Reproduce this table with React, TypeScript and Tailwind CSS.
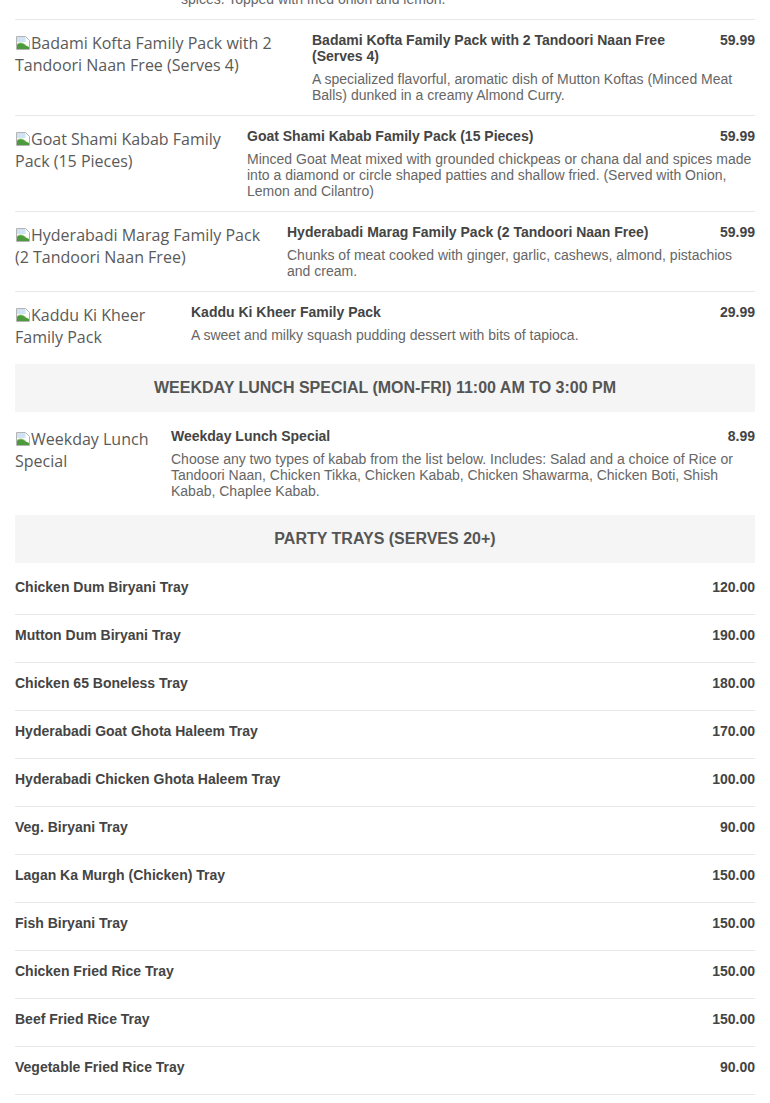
const items = [
  {
    alt: 'Badami Kofta Family Pack with 2 Tandoori Naan Free (Serves 4)',
    imgW: 'w-[282px]',
    title: 'Badami Kofta Family Pack with 2 Tandoori Naan Free (Serves 4)',
    price: '59.99',
    desc: 'A specialized flavorful, aromatic dish of Mutton Koftas (Minced Meat Balls) dunked in a creamy Almond Curry.',
  },
  {
    alt: 'Goat Shami Kabab Family Pack (15 Pieces)',
    imgW: 'w-[217px]',
    title: 'Goat Shami Kabab Family Pack (15 Pieces)',
    price: '59.99',
    desc: 'Minced Goat Meat mixed with grounded chickpeas or chana dal and spices made into a diamond or circle shaped patties and shallow fried. (Served with Onion, Lemon and Cilantro)',
  },
  {
    alt: 'Hyderabadi Marag Family Pack (2 Tandoori Naan Free)',
    imgW: 'w-[257px]',
    title: 'Hyderabadi Marag Family Pack (2 Tandoori Naan Free)',
    price: '59.99',
    desc: 'Chunks of meat cooked with ginger, garlic, cashews, almond, pistachios and cream.',
  },
  {
    alt: 'Kaddu Ki Kheer Family Pack',
    imgW: 'w-[161px]',
    title: 'Kaddu Ki Kheer Family Pack',
    price: '29.99',
    desc: 'A sweet and milky squash pudding dessert with bits of tapioca.',
  },
];

const lunch = [
  {
    alt: 'Weekday Lunch Special',
    imgW: 'w-[141px]',
    title: 'Weekday Lunch Special',
    price: '8.99',
    desc: 'Choose any two types of kabab from the list below. Includes: Salad and a choice of Rice or Tandoori Naan, Chicken Tikka, Chicken Kabab, Chicken Shawarma, Chicken Boti, Shish Kabab, Chaplee Kabab.',
  },
];

const trays = [
  ['Chicken Dum Biryani Tray', '120.00'],
  ['Mutton Dum Biryani Tray', '190.00'],
  ['Chicken 65 Boneless Tray', '180.00'],
  ['Hyderabadi Goat Ghota Haleem Tray', '170.00'],
  ['Hyderabadi Chicken Ghota Haleem Tray', '100.00'],
  ['Veg. Biryani Tray', '90.00'],
  ['Lagan Ka Murgh (Chicken) Tray', '150.00'],
  ['Fish Biryani Tray', '150.00'],
  ['Chicken Fried Rice Tray', '150.00'],
  ['Beef Fried Rice Tray', '150.00'],
  ['Vegetable Fried Rice Tray', '90.00'],
];

// what chrome draws when the photo didn't load
function BrokenImg() {
  return (
    <svg width="16" height="16" viewBox="0 0 16 16" className="inline-block align-[-2px]">
      <path d="M1.5 1.5h9l4 4v9h-13z" fill="#fff" stroke="#b4b4b4" />
      <path d="M2 2h8.5v5H2z" fill="#cfe3f4" />
      <path d="M2 14V9.5C5 7 8 8 11 10.5L14 12v2z" fill="#4c9a3c" />
      <path d="M2 9.5C5 7 8 8 11 10.5" fill="none" stroke="#8cc46f" />
    </svg>
  );
}

type Item = { alt: string; imgW: string; title: string; price: string; desc: string };

function MenuRow({ item, last }: { item: Item; last?: boolean }) {
  return (
    <div className={`flex gap-[15px] pt-3 pb-3 ${last ? 'mb-1' : 'border-b border-[#e8e8e8]'}`}>
      <div className={`${item.imgW} shrink-0 font-['Open_Sans',sans-serif] text-[16px] leading-[22px] text-[#5a5a5a]`}>
        <BrokenImg />
        {item.alt}
      </div>
      <div className="flex-1 min-w-0">
        <div className="flex justify-between items-start">
          <h4 className="font-bold text-[14px] leading-4 text-[#444] pr-5">{item.title}</h4>
          <span className="font-bold text-[14px] leading-4 text-[#444]">{item.price}</span>
        </div>
        <p className="mt-[7px] text-[14px] leading-4 text-[#666]">{item.desc}</p>
      </div>
    </div>
  );
}

function Heading({ children }: { children: string }) {
  return (
    <div className="h-12 mb-1 flex items-center justify-center bg-[#f5f5f5] font-bold text-[16px] text-[#555]">
      {children}
    </div>
  );
}

export default function App() {
  return (
    <div className="bg-white px-[15px] font-['Liberation_Sans',Arial,sans-serif] overflow-hidden h-[1103px]">
      {/* tail of the previous item, page is scrolled past its top */}
      <div className="flex gap-[15px] -mt-[9px] pb-3 border-b border-[#e8e8e8]">
        <div className="w-[151px] shrink-0" />
        <p className="text-[14px] leading-4 text-[#666]">spices. Topped with fried onion and lemon.</p>
      </div>

      {items.map((it, i) => (
        <MenuRow key={it.title} item={it} last={i === items.length - 1} />
      ))}

      <Heading>WEEKDAY LUNCH SPECIAL (MON-FRI) 11:00 AM TO 3:00 PM</Heading>
      {lunch.map((it) => (
        <MenuRow key={it.title} item={it} last />
      ))}

      <Heading>PARTY TRAYS (SERVES 20+)</Heading>
      {trays.map(([name, price]) => (
        <div key={name} className="flex justify-between pt-3 pb-[19px] border-b border-[#e8e8e8]">
          <span className="font-bold text-[14px] leading-4 text-[#444]">{name}</span>
          <span className="font-bold text-[14px] leading-4 text-[#444]">{price}</span>
        </div>
      ))}
    </div>
  );
}
